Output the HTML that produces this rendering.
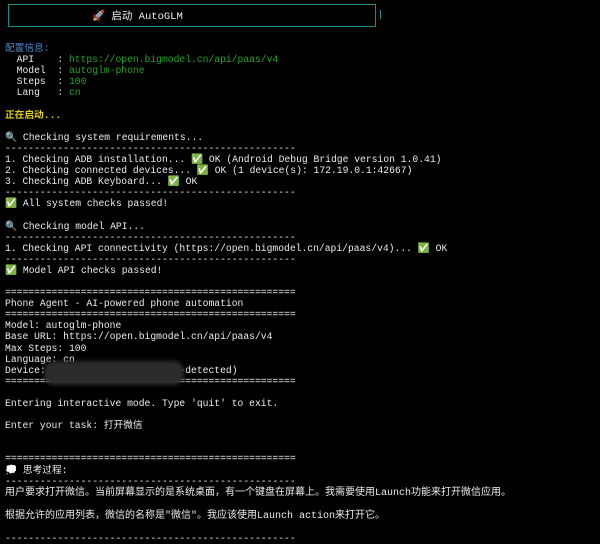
<!DOCTYPE html>
<html><head><meta charset="utf-8"><style>
html,body{margin:0;padding:0;background:#000;width:600px;height:542px;overflow:hidden}
pre{position:absolute;left:5px;top:43px;margin:0;font-family:"Liberation Mono","Noto Sans CJK SC",monospace;font-size:9.7px;line-height:11.1px;color:#ececec;white-space:pre}
.c{font-size:10px}
.b{color:#4a86c8}.g{color:#22a52a}.y{color:#e0d21a;font-weight:bold}
.box{position:absolute;left:8px;top:4px;width:366px;height:21px;border:1px solid #1e8a8a}
.box2{position:absolute;left:380px;top:10px;width:1px;height:9px;background:#1e8a8a}
.title{position:absolute;left:92px;top:8px;font-family:"Liberation Mono","Noto Sans CJK SC",monospace;font-size:10.5px;color:#f0f0f0}
.blur{position:absolute;left:44px;top:361px;width:140px;height:24px;background:#2c2c2c;border-radius:10px;filter:blur(2px)}
</style></head><body>
<div class="box"></div><div class="box2"></div>
<div class="title">🚀 启动 AutoGLM</div>
<pre><span class="b">配置信息:</span>
  API    : <span class="g">https://open.bigmodel.cn/api/paas/v4</span>
  Model  : <span class="g">autoglm-phone</span>
  Steps  : <span class="g">100</span>
  Lang   : <span class="g">cn</span>

<span class="y">正在启动...</span>

🔍 Checking system requirements...
--------------------------------------------------
1. Checking ADB installation... ✅ OK (Android Debug Bridge version 1.0.41)
2. Checking connected devices... ✅ OK (1 device(s): 172.19.0.1:42667)
3. Checking ADB Keyboard... ✅ OK
--------------------------------------------------
✅ All system checks passed!

🔍 Checking model API...
--------------------------------------------------
1. Checking API connectivity (https://open.bigmodel.cn/api/paas/v4)... ✅ OK
--------------------------------------------------
✅ Model API checks passed!

==================================================
Phone Agent - AI-powered phone automation
==================================================
Model: autoglm-phone
Base URL: https://open.bigmodel.cn/api/paas/v4
Max Steps: 100
Language: cn
Device: 172.19.0.1:42667 (auto-detected)
==================================================

Entering interactive mode. Type 'quit' to exit.

Enter your task: 打开微信


==================================================
💭 思考过程:
--------------------------------------------------
<span class="c">用户要求打开微信。当前屏幕显示的是系统桌面，有一个键盘在屏幕上。我需要使用Launch功能来打开微信应用。</span>

<span class="c">根据允许的应用列表，微信的名称是"微信"。我应该使用Launch action来打开它。</span>

--------------------------------------------------</pre>
<div class="blur"></div>
</body></html>
